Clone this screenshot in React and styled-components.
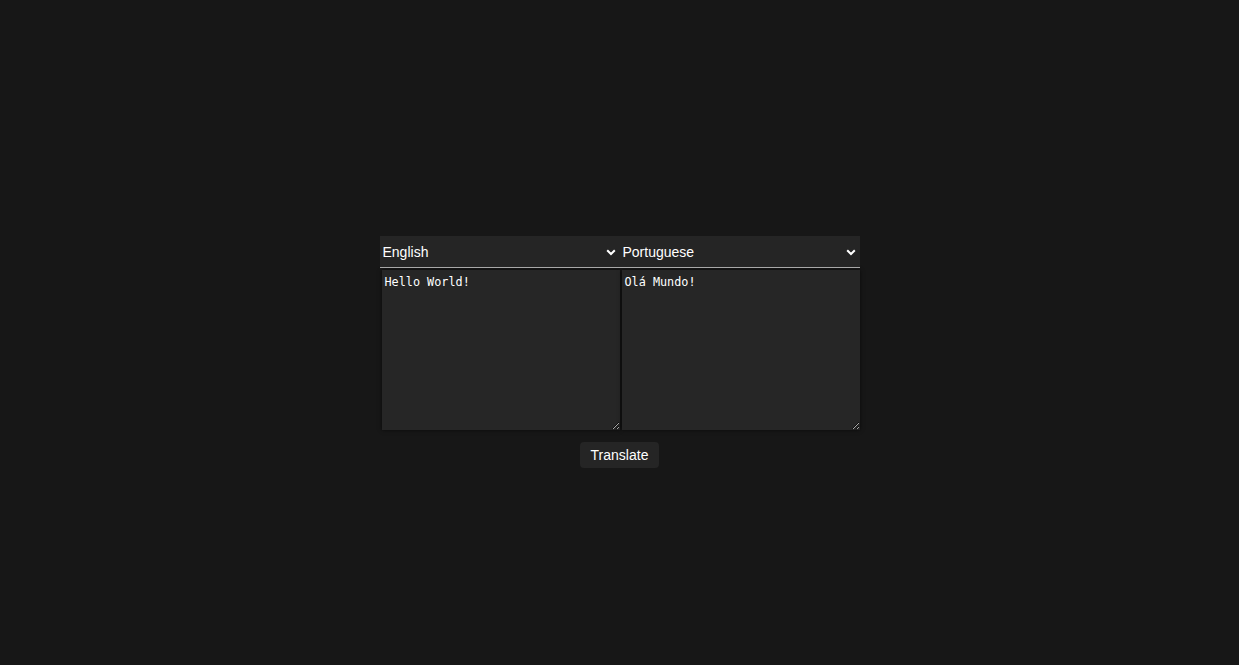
import React, { useState } from "react";
import styled, { createGlobalStyle } from "styled-components";

const Global = createGlobalStyle`
  html, body { margin: 0; padding: 0; background: #171717; }
  body { font-family: "Liberation Sans", Arial, sans-serif; color: #fff; }
`;

const Page = styled.div`
  min-height: 665px;
  display: flex;
  justify-content: center;
  padding-top: 236px;
  box-sizing: border-box;
`;

const Translator = styled.div`
  width: 480px;
  display: flex;
  flex-direction: column;
  align-items: center;
`;

const Row = styled.div`
  display: flex;
  width: 100%;
`;

const SelectWrap = styled.div`
  position: relative;
  width: 50%;
`;

const Select = styled.select`
  appearance: none;
  width: 100%;
  height: 32px;
  background: #252525;
  color: #fff;
  border: none;
  border-bottom: 1px solid #a8a8a8;
  border-radius: 0;
  font-family: "Liberation Sans", Arial, sans-serif;
  font-size: 14px;
  padding: 0 0 0 3px;
  outline: none;
`;

const Chevron = styled.svg`
  position: absolute;
  right: 4px;
  top: 13px;
  pointer-events: none;
`;

const TextArea = styled.textarea`
  width: 238px;
  height: 160px;
  margin: 2px 0 0 2px;
  box-sizing: border-box;
  background: #262626;
  color: #fff;
  border: none;
  box-shadow: 0 0 4px rgba(0, 0, 0, 0.6);
  font-family: "DejaVu Sans Mono", monospace;
  font-size: 11.8px;
  padding: 5px 3px;
  outline: none;
  resize: both;
  color-scheme: dark;
`;

const Button = styled.button`
  margin-top: 12px;
  height: 26px;
  padding: 0 11px;
  background: #252525;
  color: #fff;
  border: none;
  border-radius: 4px;
  font-family: "Liberation Sans", Arial, sans-serif;
  font-size: 14px;
  cursor: pointer;
`;

const LangSelect = ({ value, options }) => (
  <SelectWrap>
    <Select defaultValue={value}>
      {options.map((o) => (
        <option key={o}>{o}</option>
      ))}
    </Select>
    <Chevron width="10" height="7" viewBox="0 0 10 7">
      <path d="M1.2 1.2 L5 5 L8.8 1.2" fill="none" stroke="#fff" strokeWidth="2" />
    </Chevron>
  </SelectWrap>
);

const langs = ["English", "Portuguese", "Spanish", "French", "German"];

export default function App() {
  const [src, setSrc] = useState("Hello World!");
  const [dst, setDst] = useState("Olá Mundo!");
  return (
    <>
      <Global />
      <Page>
        <Translator>
          <Row>
            <LangSelect value="English" options={langs} />
            <LangSelect value="Portuguese" options={langs} />
          </Row>
          <Row>
            <TextArea value={src} onChange={(e) => setSrc(e.target.value)} />
            <TextArea value={dst} onChange={(e) => setDst(e.target.value)} />
          </Row>
          <Button>Translate</Button>
        </Translator>
      </Page>
    </>
  );
}
